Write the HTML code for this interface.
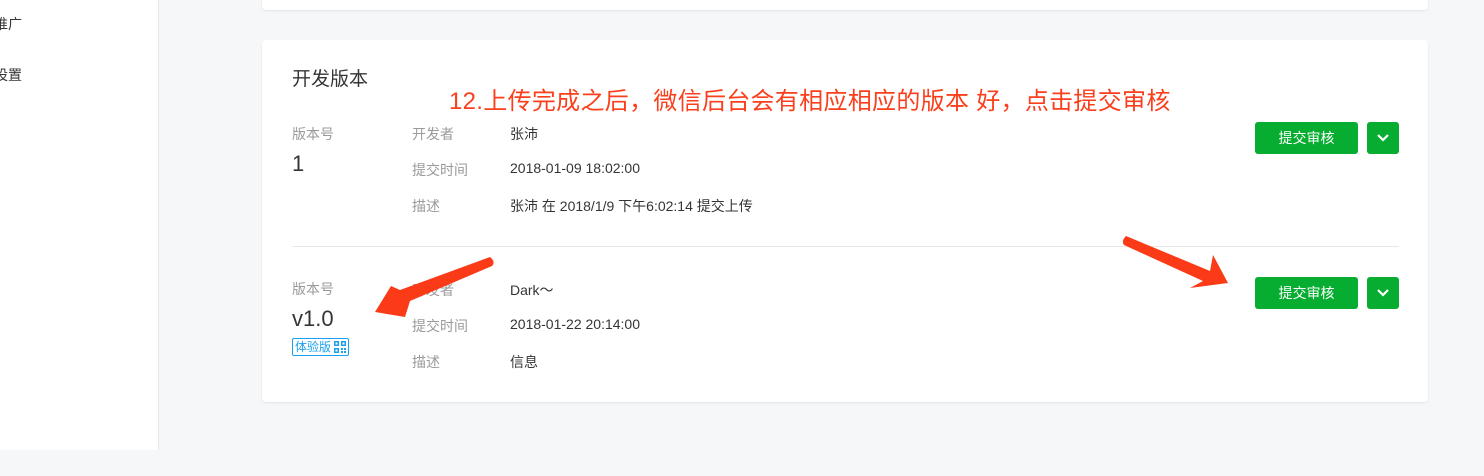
<!DOCTYPE html>
<html><head><meta charset="utf-8"><style>
*{margin:0;padding:0;box-sizing:border-box}
body{width:1484px;height:476px;background:#f6f7f9;font-family:"Liberation Sans","Noto Sans CJK SC",sans-serif;position:relative;overflow:hidden;color:#353535}
.side{position:absolute;left:0;top:0;width:159px;height:450px;background:#fff;border-right:1px solid #e4e6e9}
.a{position:absolute;white-space:nowrap}
.card{position:absolute;left:262px;width:1166px;background:#fff;border-radius:4px;box-shadow:0 1px 2px rgba(0,0,0,.08)}
.lbl{color:#9a9a9a;font-size:14px}
.val{font-size:14px;color:#353535}
.btn{position:absolute;background:#06ad30;border-radius:3px;color:#fff;font-size:14px;text-align:center;line-height:32px}
</style></head><body>
<div class="side">
<div class="a" style="left:-6px;top:14px;font-size:14px">推广</div>
<div class="a" style="left:-6px;top:65px;font-size:14px">设置</div>
</div>
<div class="card" style="top:-10px;height:20px"></div>
<div class="card" style="top:40px;height:362px"></div>
<div class="a" style="left:292px;top:64px;font-size:19px;color:#353535">开发版本</div>
<div class="a" style="left:449px;top:81px;font-size:24px;letter-spacing:0.3px;color:#fb3f1c">12.上传完成之后，微信后台会有相应相应的版本 好，点击提交审核</div>

<div class="a lbl" style="left:292px;top:124px">版本号</div>
<div class="a" style="left:292px;top:151px;font-size:22px">1</div>
<div class="a lbl" style="left:412px;top:124px">开发者</div>
<div class="a val" style="left:510px;top:124px">张沛</div>
<div class="a lbl" style="left:412px;top:160px">提交时间</div>
<div class="a val" style="left:510px;top:160px">2018-01-09 18:02:00</div>
<div class="a lbl" style="left:412px;top:196px">描述</div>
<div class="a val" style="left:510px;top:196px">张沛 在 2018/1/9 下午6:02:14 提交上传</div>
<div class="btn" style="left:1255px;top:122px;width:103px;height:32px">提交审核</div>
<div class="btn" style="left:1367px;top:122px;width:32px;height:32px"><svg width="14" height="10" viewBox="0 0 14 10" style="margin-top:11px"><path d="M2 2l5 5 5-5" stroke="#fff" stroke-width="2.2" fill="none"/></svg></div>

<div class="a" style="left:292px;top:246px;width:1107px;height:1px;background:#e7e7eb"></div>

<div class="a lbl" style="left:292px;top:279px">版本号</div>
<div class="a" style="left:292px;top:306px;font-size:22px">v1.0</div>
<div class="a" style="left:292px;top:338px;width:57px;height:18px;border:1px solid #1aa0f0;border-radius:2px;color:#1aa0f0;font-size:12px;line-height:16px;padding-left:2px">体验版<svg width="12" height="12" viewBox="0 0 12 12" style="position:absolute;right:2px;top:2px"><path d="M0 0h5v5H0zM7 0h5v5H7zM0 7h5v5H0zM7 7h2v2H7zM10 10h2v2h-2zM7 10h2v2H7zM10 7h2v2h-2z" fill="#1aa0f0"/><path d="M1.5 1.5h2v2h-2zM8.5 1.5h2v2h-2zM1.5 8.5h2v2h-2z" fill="#fff"/></svg></div>
<div class="a lbl" style="left:412px;top:280px">开发者</div>
<div class="a val" style="left:510px;top:280px">Dark～</div>
<div class="a lbl" style="left:412px;top:316px">提交时间</div>
<div class="a val" style="left:510px;top:316px">2018-01-22 20:14:00</div>
<div class="a lbl" style="left:412px;top:352px">描述</div>
<div class="a val" style="left:510px;top:352px">信息</div>
<div class="btn" style="left:1255px;top:277px;width:103px;height:32px">提交审核</div>
<div class="btn" style="left:1367px;top:277px;width:32px;height:32px"><svg width="14" height="10" viewBox="0 0 14 10" style="margin-top:11px"><path d="M2 2l5 5 5-5" stroke="#fff" stroke-width="2.2" fill="none"/></svg></div>

<svg class="a" style="left:0;top:0" width="1484" height="476">
<path d="M490 257 Q496 262 492 266 L410 301 L405 317 L375 312 L391 286 L400 290 Z" fill="#fb3a17"/>
<path d="M1126 236 Q1121 241 1124 245 L1203 281 L1190 288 L1228 283 L1213 255 L1210 271 Z" fill="#fb3a17"/>
</svg>
</body></html>
